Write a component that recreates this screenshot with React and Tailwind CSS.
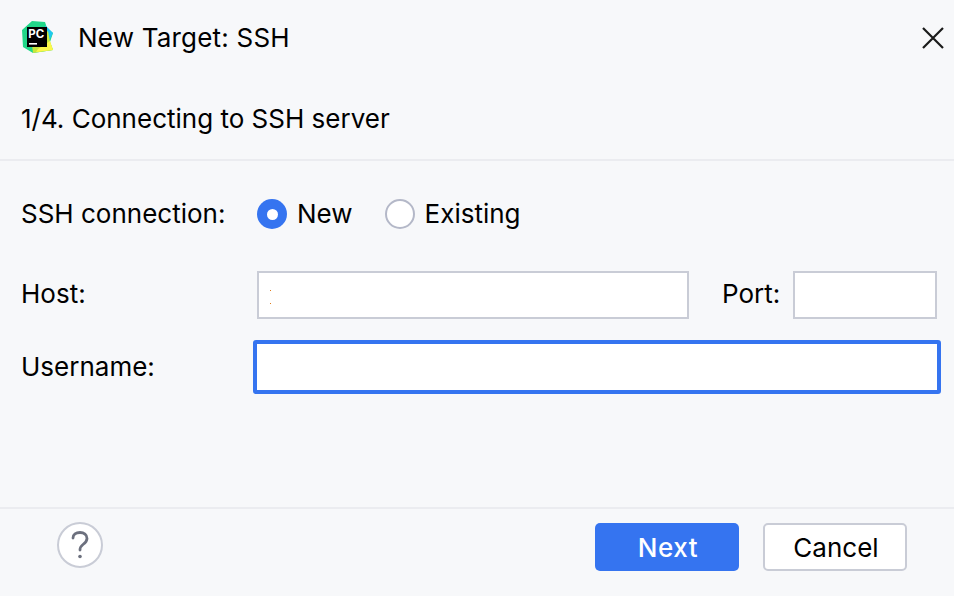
function PyCharmLogo() {
  return (
    <svg width="34" height="34" viewBox="0 0 34 34" className="shrink-0">
      <polygon points="2,9 12,0 25,1 27,7 33,12 30,21 33,29 13,32 3,26" fill="#21d789" />
      <polygon points="25,4 33,12 30,18 26,16" fill="#1fc8f0" />
      <polygon points="12,24 28,10 30,21 33,29 13,32" fill="#c8e63c" />
      <polygon points="18,28 30,20 33,29 16,31" fill="#fcf84a" />
      <rect x="7" y="6" width="20" height="20" fill="#000" />
      <text x="8.2" y="16.5" fill="#fff" fontSize="11.5" fontWeight="700" fontFamily="Inter, sans-serif">PC</text>
      <rect x="9" y="22" width="8" height="1.6" fill="#fff" />
    </svg>
  );
}

function Radio({ checked, label }) {
  return (
    <div className="flex items-center gap-[10px]">
      {checked ? (
        <div className="w-[30px] h-[30px] rounded-full bg-[#3574f0] flex items-center justify-center">
          <div className="w-[11px] h-[11px] rounded-full bg-white" />
        </div>
      ) : (
        <div className="w-[30px] h-[30px] rounded-full bg-white border-2 border-[#b4b8c8]" />
      )}
      <span>{label}</span>
    </div>
  );
}

export default function App() {
  return (
    <div className="w-[954px] h-[596px] bg-[#f7f8fa] text-[26px] leading-[32px] text-black flex flex-col overflow-hidden font-['Inter',sans-serif]">
      <div className="h-[76px] shrink-0 flex items-center pl-[20px] pr-[10px]">
        <PyCharmLogo />
        <span className="ml-[24px] tracking-[0.2px]">New Target: SSH</span>
        <svg className="ml-auto" width="22" height="22" viewBox="0 0 22 22" fill="none" stroke="#1a1a1a" strokeWidth="2.2">
          <path d="M1 1 L21 21 M21 1 L1 21" />
        </svg>
      </div>

      <div className="h-[85px] shrink-0 border-b-2 border-[#ebecf0] pl-[21px] pt-[27px]">
        1/4. Connecting to SSH server
      </div>

      <div className="flex-1 pl-[21px] pr-[13px] pt-[36px]">
        <div className="flex items-center h-[34px]">
          <span className="w-[236px]">SSH connection:</span>
          <Radio checked label="New" />
          <div className="w-[32px]" />
          <Radio label="Existing" />
        </div>

        <div className="flex items-center mt-[40px] h-[48px]">
          <span className="w-[236px] pb-[2px]">Host:</span>
          <div className="relative w-[432px] h-[48px] bg-white border-2 border-[#c9ccd6]">
            <div className="absolute left-[11px] top-[17px] w-[1px] h-[1px] bg-[#e07b1a]" />
            <div className="absolute left-[11px] top-[30px] w-[1px] h-[1px] bg-[#e07b1a]" />
          </div>
          <span className="ml-[33px] w-[71px] pb-[2px]">Port:</span>
          <div className="w-[144px] h-[48px] bg-white border-2 border-[#c9ccd6]" />
        </div>

        <div className="flex items-center mt-[21px] h-[54px]">
          <span className="w-[232px]">Username:</span>
          <div className="w-[688px] h-[54px] bg-white border-[4px] border-[#3574f0] rounded-[3px]" />
        </div>
      </div>

      <div className="h-[89px] shrink-0 border-t-2 border-[#ebecf0] flex items-start pt-[13px] pl-[57px] pr-[47px]">
        <div className="w-[46px] h-[46px] rounded-full bg-white border-2 border-[#c9ccd6] flex items-center justify-center">
          <svg width="18" height="28" viewBox="0 0 18 28" fill="none" stroke="#6c707e" strokeWidth="2.8" strokeLinecap="round">
            <path d="M2 7 C2 3.5 5 1.5 9 1.5 C13 1.5 16 4 16 7.5 C16 10.5 14 12 12 13.5 C10 15 9 16.5 9 19" />
            <circle cx="9" cy="25.5" r="1.8" fill="#6c707e" stroke="none" />
          </svg>
        </div>
        <div className="ml-auto flex gap-[24px] mt-[1px]">
          <button className="w-[144px] h-[48px] pt-[2px] pl-[2px] rounded-[5px] bg-[#3574f0] text-white font-medium tracking-[0.6px]">Next</button>
          <button className="w-[144px] h-[48px] pt-[2px] pl-[2px] rounded-[5px] bg-white border-2 border-[#c9ccd6]">Cancel</button>
        </div>
      </div>
    </div>
  );
}
